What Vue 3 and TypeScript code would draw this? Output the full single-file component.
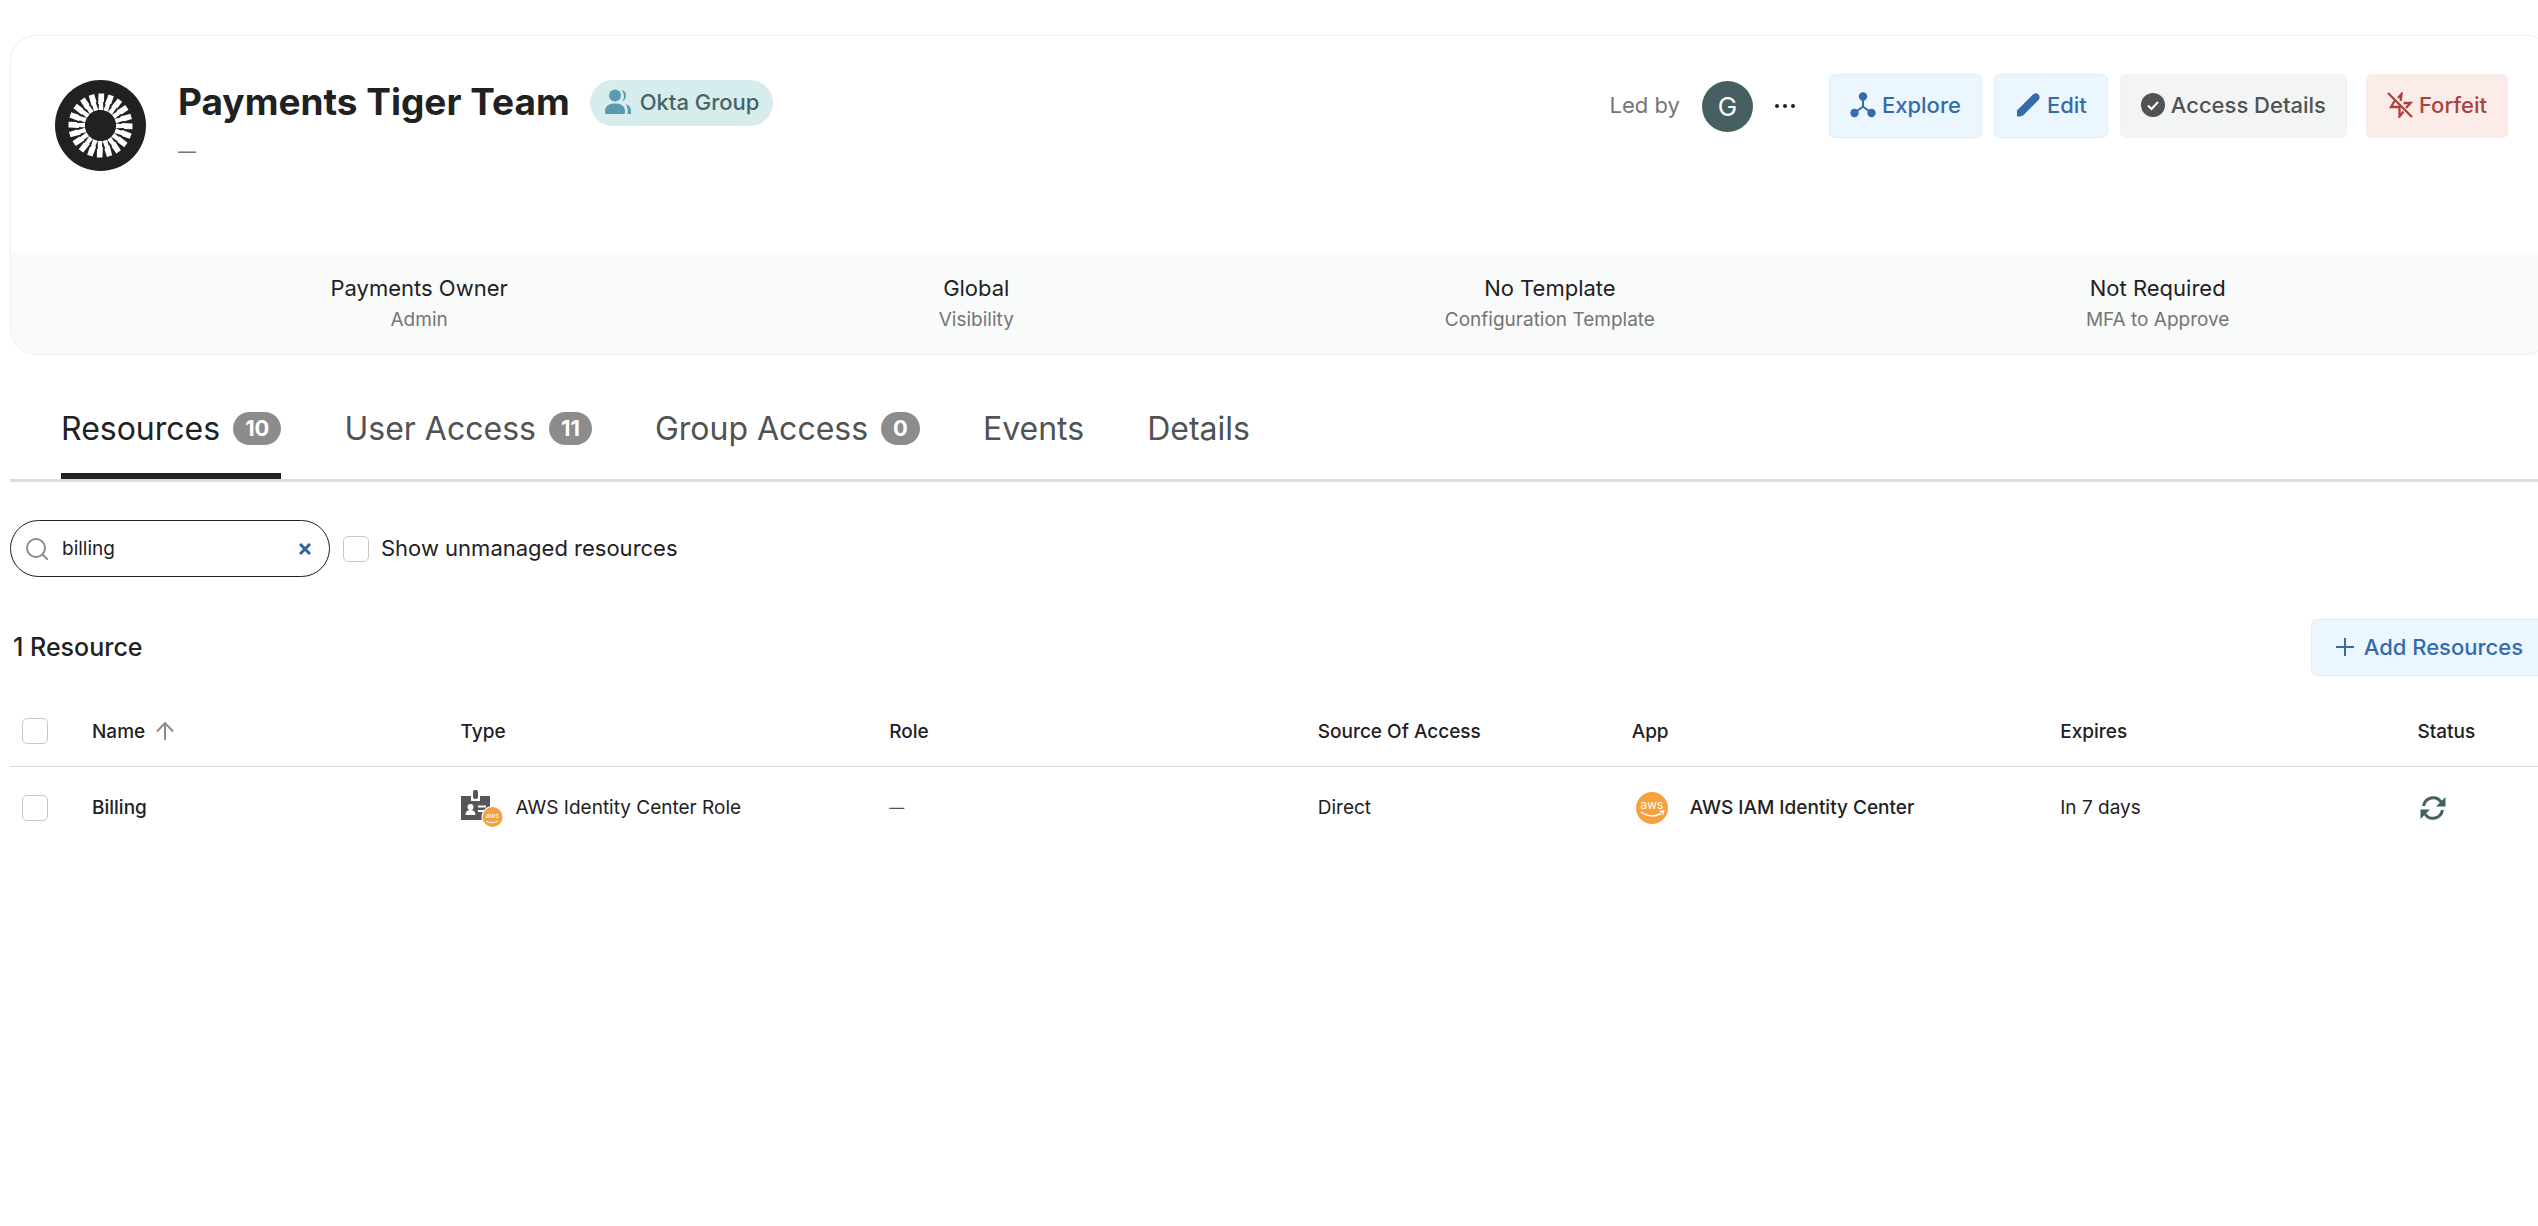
<script setup lang="ts">
import { ref } from 'vue'

interface Stat { value: string; label: string }
interface Tab { name: string; count?: number }

const stats: Stat[] = [
  { value: 'Payments Owner', label: 'Admin' },
  { value: 'Global', label: 'Visibility' },
  { value: 'No Template', label: 'Configuration Template' },
  { value: 'Not Required', label: 'MFA to Approve' },
]
const tabs: Tab[] = [
  { name: 'Resources', count: 10 },
  { name: 'User Access', count: 11 },
  { name: 'Group Access', count: 0 },
  { name: 'Events' },
  { name: 'Details' },
]
const active = ref('Resources')
const query = ref('billing')
const rays = Array.from({ length: 20 }, (_, i) => i * 18)
</script>

<template>
  <div class="viewport">
    <main class="page">
      <section class="card">
        <header class="head">
          <svg class="logo" viewBox="0 0 91 91" aria-hidden="true">
            <circle cx="45.500" cy="45.500" r="45.500" fill="#1f2123" />
            <path
              v-for="a in rays"
              :key="a"
              :transform="`rotate(${a + 1} 45.5 45.5)`"
              d="M43 13.500h5.600v8.500h-.9l.3 8h-4.700l.3-6h-.9z"
              fill="#fff"
            />
          </svg>
          <div class="identity">
            <div class="title-row">
              <h1>Payments Tiger Team</h1>
              <span class="group-badge">
                <svg width="28" height="26" viewBox="0 0 28 26" fill="#5a9bb0" aria-hidden="true">
                  <circle cx="11" cy="6.500" r="6" />
                  <path d="M1 23.500v-1.500c0-5 4-7.500 10-7.500s10 2.500 10 7.500v1.500q0 1.500-1.500 1.500h-17Q1 25 1 23.500z" />
                  <path d="M17.500 1c5 .5 6.500 8.500 1 11.500 2.200-4 2-8-1-11.500zM21.500 15c3.500 1 5.500 3.500 5.500 7v3h-3.500c.6-4 .2-7-2-10z" />
                </svg>
                Okta Group
              </span>
            </div>
            <p class="description">—</p>
          </div>
          <div class="actions">
            <span class="led">Led by</span>
            <span class="avatar">G</span>
            <button class="more" type="button" aria-label="More">
              <svg width="20" height="4" viewBox="0 0 20 4" fill="#1f2123"><circle cx="2" cy="2" r="2" /><circle cx="10" cy="2" r="2" /><circle cx="18" cy="2" r="2" /></svg>
            </button>
            <button class="btn blue" type="button">
              <svg width="26" height="26" viewBox="0 0 26 26" fill="#336cab" aria-hidden="true">
                <circle cx="13" cy="4.500" r="4.200" /><circle cx="4.500" cy="21" r="4.200" /><circle cx="21.500" cy="21" r="4.200" />
                <path d="M13 4v11M13 14.500l-8.500 6.500M13 14.500l8.500 6.500" stroke="#336cab" stroke-width="2" fill="none" />
              </svg>
              Explore
            </button>
            <button class="btn blue" type="button">
              <svg width="26" height="26" viewBox="0 0 26 26" fill="#336cab" aria-hidden="true">
                <path d="M2 24.500v-6L17.500 3Q20.500 0 23.500 2.500 26 5.500 23 8.500L8 23.500 5 24.500z" />
              </svg>
              Edit
            </button>
            <button class="btn grey" type="button">
              <svg width="24" height="24" viewBox="0 0 24 24" aria-hidden="true">
                <circle cx="12" cy="12" r="12" fill="#505254" />
                <path d="M7 12.500l3.500 3.500 6.500-7" fill="none" stroke="#fff" stroke-width="2" />
              </svg>
              Access Details
            </button>
            <button class="btn red" type="button">
              <svg width="26" height="26" viewBox="0 0 26 26" fill="none" stroke="#a9433a" stroke-width="2.300" aria-hidden="true">
                <path d="M1 1l24 24M11 6l3.500-4-.8 7M16.500 11h7l-4.500 5M7.500 9L4 15h8.500v9.500l4-5" />
              </svg>
              Forfeit
            </button>
          </div>
        </header>
        <dl class="stats">
          <div v-for="s in stats" :key="s.label" class="stat">
            <dd>{{ s.value }}</dd>
            <dt>{{ s.label }}</dt>
          </div>
        </dl>
      </section>

      <nav class="tabs">
        <button
          v-for="t in tabs"
          :key="t.name"
          type="button"
          class="tab"
          :class="{ active: active === t.name }"
          @click="active = t.name"
        >
          {{ t.name }}
          <span v-if="t.count !== undefined" class="count">{{ t.count }}</span>
        </button>
      </nav>

      <div class="filters">
        <div class="search">
          <svg width="22" height="22" viewBox="0 0 22 22" fill="none" stroke="#8c8c8c" stroke-width="2" stroke-linecap="round" aria-hidden="true">
            <circle cx="10" cy="10" r="9" /><path d="M16.500 16.500l4.500 4.500" />
          </svg>
          <input v-model="query" type="text" aria-label="Search resources" />
          <button type="button" aria-label="Clear search" @click="query = ''">
            <svg width="12" height="12" viewBox="0 0 12 12" stroke="#2f6599" stroke-width="3"><path d="M1 1l10 10M11 1L1 11" /></svg>
          </button>
        </div>
        <input id="unmanaged" type="checkbox" class="check" />
        <label for="unmanaged">Show unmanaged resources</label>
      </div>

      <div class="list-head">
        <h2>1 Resource</h2>
        <button class="btn blue add" type="button">
          <svg width="18" height="18" viewBox="0 0 18 18" stroke="#336cab" stroke-width="2" aria-hidden="true"><path d="M9 0v18M0 9h18" /></svg>
          Add Resources
        </button>
      </div>

      <table>
        <colgroup>
          <col class="c-check" /><col class="c-name" /><col class="c-type" /><col class="c-type" />
          <col class="c-source" /><col class="c-type" /><col class="c-expires" /><col />
        </colgroup>
        <thead>
          <tr>
            <th><input type="checkbox" class="check" aria-label="Select all" /></th>
            <th>
              <span class="sort">Name
                <svg width="18" height="18" viewBox="0 0 18 18" fill="none" stroke="#8c8c8c" stroke-width="2" aria-hidden="true"><path d="M9 18V1M1 9.500L9 1l8 8.500" /></svg>
              </span>
            </th>
            <th>Type</th>
            <th>Role</th>
            <th>Source Of Access</th>
            <th>App</th>
            <th>Expires</th>
            <th>Status</th>
          </tr>
        </thead>
        <tbody>
          <tr>
            <td><input type="checkbox" class="check" aria-label="Select Billing" /></td>
            <td class="strong">Billing</td>
            <td>
              <span class="cell">
                <svg class="type-icon" width="44" height="40" viewBox="0 0 44 40" aria-hidden="true">
                  <path d="M0 8h10v5h9V8h10v24H0z" fill="#555659" />
                  <rect x="12" y="2" width="5" height="9" rx="2" fill="#555659" />
                  <circle cx="9.500" cy="19" r="3" fill="#fff" />
                  <path d="M4.500 27q0-5 5-5t5 5zM17 17.500h8v2h-8zM17 22h6v2h-6z" fill="#fff" />
                  <circle cx="31.500" cy="29" r="11" fill="#fff" />
                  <circle cx="31.500" cy="29" r="10" fill="#f4a13e" />
                  <text x="31.500" y="30" text-anchor="middle" font-size="7" fill="#fff">aws</text>
                  <path d="M25 33q6 3.500 12 0" stroke="#fff" fill="none" />
                </svg>
                AWS Identity Center Role
              </span>
            </td>
            <td class="none">—</td>
            <td>Direct</td>
            <td class="strong">
              <span class="cell app">
                <svg width="32" height="32" viewBox="0 0 32 32" aria-hidden="true">
                  <circle cx="16" cy="16" r="16" fill="#f4a13e" />
                  <text x="16" y="17" text-anchor="middle" font-size="12" font-weight="400" fill="#fff">aws</text>
                  <path d="M5 20q10 7 20 1.500M24 19.500l3.500-.3-.8 3.500" stroke="#fff" stroke-width="1.500" fill="none" />
                </svg>
                AWS IAM Identity Center
              </span>
            </td>
            <td>In 7 days</td>
            <td>
              <svg class="sync" width="26" height="24" viewBox="0 0 26 24" role="img" aria-label="Syncing">
                <path d="M3.500 10C5 1.500 16-1.500 21 6M22.500 14C21 22.500 10 25.500 5 18" fill="none" stroke="#426062" stroke-width="3" />
                <path d="M25.500 1v9.500H16zM.5 23v-9.500H10z" fill="#426062" />
              </svg>
            </td>
          </tr>
        </tbody>
      </table>
    </main>
  </div>
</template>

<style>
body { margin: 0; background: #fff; }
</style>

<style scoped>
.viewport { overflow: hidden; font-family: Inter, "Liberation Sans", sans-serif; color: #1f2123; font-size: 22px; }
.page { margin: 35px -14px 0 10px; }
button, input { font: inherit; color: inherit; }
button { cursor: pointer; }
h1, h2, p, dl, dd { margin: 0; }
svg { flex: none; display: block; }
.card { border: 1px solid #eeefef; border-radius: 26px; overflow: hidden; }
.head { display: flex; align-items: flex-start; height: 217px; box-sizing: border-box; padding: 38px 43px 0 44px; }
.logo { width: 91px; height: 91px; margin-top: 6px; }
.identity { margin: 6px 0 0 32px; }
.title-row { display: flex; align-items: flex-start; gap: 20px; }
h1 { font-size: 37px; font-weight: 700; line-height: 44px; }
.group-badge { display: flex; align-items: center; gap: 8px; height: 46px; box-sizing: border-box; padding: 0 14px 2px; border-radius: 23px; background: #d7ecec; color: #456468; font-weight: 500; }
.description { margin-top: 12px; font-size: 18px; line-height: 28px; color: #757575; }
.actions { display: flex; align-items: center; margin-left: auto; }
.led { padding-bottom: 2px; color: #757575; }
.avatar { width: 51px; height: 51px; margin-left: 22px; border-radius: 50%; background: #465f61; color: #fff; font-size: 26px; line-height: 51px; text-align: center; }
.more { border: 0; background: none; padding: 12px 22px; margin-right: 12px; }
.btn { display: flex; align-items: center; gap: 6px; height: 64px; padding: 0 20px 2px; border: 1px solid; border-radius: 6px; font-weight: 500; white-space: nowrap; }
.btn + .btn { margin-left: 12px; }
.blue { background: #ebf6ff; border-color: #dceefa; color: #336cab; }
.grey { background: #f3f5f4; border-color: #eff1f0; color: #505254; }
.btn.red { background: #fcece9; border-color: #fae8e5; color: #a9433a; margin-left: 19px; }
.stats { display: flex; justify-content: space-around; background: #f9fafa; padding: 20px 106px 17px 104px; }
.stat { display: flex; flex-direction: column; align-items: center; }
.stat dd { line-height: 30px; }
.stat dt { font-size: 19px; line-height: 34px; color: #757575; }
.tabs { display: flex; gap: 63px; margin-top: 36px; padding-left: 51px; border-bottom: 3px solid #ddd; }
.tab { display: flex; align-items: center; gap: 13px; height: 88px; padding: 0 0 8px; border: 0; border-bottom: 6px solid transparent; background: none; font-size: 32px; color: #505254; }
.tab.active { color: #1f2123; border-bottom-color: #1f2123; }
.count { height: 33px; padding: 0 12px; border-radius: 17px; background: #8c8c8c; color: #fff; font-size: 22px; line-height: 33px; font-weight: 700; }
.filters { display: flex; align-items: center; margin-top: 38px; }
.search { display: flex; align-items: center; gap: 14px; width: 320px; height: 57px; box-sizing: border-box; padding: 0 18px 0 15px; margin-right: 13px; border: 1px solid #1f2123; border-radius: 29px; font-size: 19px; }
.search input { flex: 1; min-width: 0; border: 0; outline: 0; padding: 0; background: none; }
.search button { border: 0; background: none; padding: 0; }
.check { appearance: none; display: block; width: 26px; height: 26px; box-sizing: border-box; margin: 0; border: 1px solid #c8c8c8; border-radius: 5px; background: #fff; }
.filters label { margin-left: 12px; padding-bottom: 2px; }
.list-head { display: flex; align-items: center; justify-content: space-between; margin-top: 42px; }
h2 { margin-left: 3px; padding-bottom: 2px; font-size: 25px; font-weight: 500; }
.add { height: 57px; padding: 0 28px 2px 24px; gap: 10px; }
table { width: 100%; margin-top: 20px; border-collapse: collapse; table-layout: fixed; font-size: 19px; }
th, td { padding: 0 0 0 12px; text-align: left; font-weight: 400; }
th { height: 70px; border-bottom: 1px solid #d8d8d8; font-weight: 500; }
td { height: 81px; }
.strong { font-weight: 500; }
.none { font-size: 15px; color: #505254; }
.c-check { width: 70px; }
.c-name { width: 14.500%; }
.c-type { width: 16.860%; }
.c-source { width: 12.350%; }
.c-expires { width: 14.050%; }
.sort, .cell { display: flex; align-items: center; gap: 11px; }
.app { gap: 22px; padding-left: 4px; }
.sync { margin-left: 3px; }
</style>
